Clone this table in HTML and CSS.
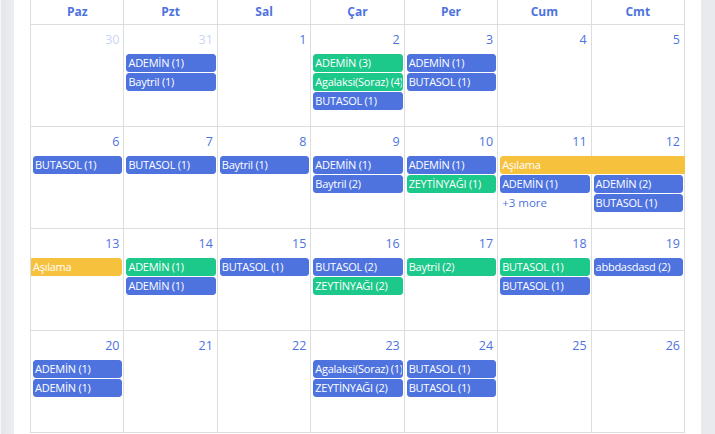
FILE: index.html
```html
<!DOCTYPE html>
<html lang="tr">
<head>
<meta charset="utf-8">
<title>Takvim</title>
<link rel="stylesheet" href="styles.css">
</head>
<body>
<div class="side side-left"></div>
<main class="main">
  <div class="cal">
    <div class="head">
      <div class="hc">Paz</div><div class="hc">Pzt</div><div class="hc">Sal</div><div class="hc">Çar</div><div class="hc">Per</div><div class="hc">Cum</div><div class="hc">Cmt</div>
    </div>

    <div class="week">
      <div class="bg c1"></div><div class="bg c2"></div><div class="bg c3"></div><div class="bg c4"></div><div class="bg c5"></div><div class="bg c6"></div><div class="bg c7"></div>
      <div class="num c1 other">30</div><div class="num c2 other">31</div><div class="num c3">1</div><div class="num c4">2</div><div class="num c5">3</div><div class="num c6">4</div><div class="num c7">5</div>
      <div class="ev blue c2 r1">ADEMİN (1)</div>
      <div class="ev blue c2 r2">Baytril (1)</div>
      <div class="ev green c4 r1">ADEMİN (3)</div>
      <div class="ev green c4 r2">Agalaksi(Soraz) (4)</div>
      <div class="ev blue c4 r3">BUTASOL (1)</div>
      <div class="ev blue c5 r1">ADEMİN (1)</div>
      <div class="ev blue c5 r2">BUTASOL (1)</div>
    </div>

    <div class="week">
      <div class="bg c1"></div><div class="bg c2"></div><div class="bg c3"></div><div class="bg c4"></div><div class="bg c5"></div><div class="bg c6"></div><div class="bg c7"></div>
      <div class="num c1">6</div><div class="num c2">7</div><div class="num c3">8</div><div class="num c4">9</div><div class="num c5">10</div><div class="num c6">11</div><div class="num c7">12</div>
      <div class="ev blue c1 r1">BUTASOL (1)</div>
      <div class="ev blue c2 r1">BUTASOL (1)</div>
      <div class="ev blue c3 r1">Baytril (1)</div>
      <div class="ev blue c4 r1">ADEMİN (1)</div>
      <div class="ev blue c4 r2">Baytril (2)</div>
      <div class="ev blue c5 r1">ADEMİN (1)</div>
      <div class="ev green c5 r2">ZEYTİNYAĞI (1)</div>
      <div class="ev yellow s6-2 r1 cont-end">Aşılama</div>
      <div class="ev blue c6 r2">ADEMİN (1)</div>
      <div class="more c6 r3">+3 more</div>
      <div class="ev blue c7 r2">ADEMİN (2)</div>
      <div class="ev blue c7 r3">BUTASOL (1)</div>
    </div>

    <div class="week">
      <div class="bg c1"></div><div class="bg c2"></div><div class="bg c3"></div><div class="bg c4"></div><div class="bg c5"></div><div class="bg c6"></div><div class="bg c7"></div>
      <div class="num c1">13</div><div class="num c2">14</div><div class="num c3">15</div><div class="num c4">16</div><div class="num c5">17</div><div class="num c6">18</div><div class="num c7">19</div>
      <div class="ev yellow c1 r1 cont-start">Aşılama</div>
      <div class="ev green c2 r1">ADEMİN (1)</div>
      <div class="ev blue c2 r2">ADEMİN (1)</div>
      <div class="ev blue c3 r1">BUTASOL (1)</div>
      <div class="ev blue c4 r1">BUTASOL (2)</div>
      <div class="ev green c4 r2">ZEYTİNYAĞI (2)</div>
      <div class="ev green c5 r1">Baytril (2)</div>
      <div class="ev green c6 r1">BUTASOL (1)</div>
      <div class="ev blue c6 r2">BUTASOL (1)</div>
      <div class="ev blue c7 r1">abbdasdasd (2)</div>
    </div>

    <div class="week">
      <div class="bg c1"></div><div class="bg c2"></div><div class="bg c3"></div><div class="bg c4"></div><div class="bg c5"></div><div class="bg c6"></div><div class="bg c7"></div>
      <div class="num c1">20</div><div class="num c2">21</div><div class="num c3">22</div><div class="num c4">23</div><div class="num c5">24</div><div class="num c6">25</div><div class="num c7">26</div>
      <div class="ev blue c1 r1">ADEMİN (1)</div>
      <div class="ev blue c1 r2">ADEMİN (1)</div>
      <div class="ev blue c4 r1">Agalaksi(Soraz) (1)</div>
      <div class="ev blue c4 r2">ZEYTİNYAĞI (2)</div>
      <div class="ev blue c5 r1">BUTASOL (1)</div>
      <div class="ev blue c5 r2">BUTASOL (1)</div>
    </div>
  </div>
</main>
<div class="side side-right"></div>
</body>
</html>
```

FILE: styles.css
```css
* { box-sizing: border-box; }
html, body { margin: 0; padding: 0; }
body {
  display: flex;
  height: 434px;
  overflow: hidden;
  background: #fff;
  font-family: "Open Sans", "Noto Sans", "Liberation Sans", sans-serif;
}
.side { width: 14px; flex: none; }
.side-left {
  background: linear-gradient(to right, #f6f7f9 0, #f6f7f9 1px, #e5e6eb 1px, #eceef2 14px);
}
.side-right { background: #e9eaee; }
.main { flex: 1; padding: 0 16px; }
.cal { width: 655px; border-left: 1px solid #dddddd; }

.head {
  display: grid;
  grid-template-columns: repeat(7, 1fr);
  height: 25px;
  border-bottom: 1px solid #dddddd;
}
.hc {
  border-right: 1px solid #dddddd;
  text-align: center;
  font-weight: 700;
  font-size: 12px;
  line-height: 24px;
  color: #4e73df;
}

.week {
  display: grid;
  grid-template-columns: repeat(7, 1fr);
  grid-template-rows: 29px 19px 19px 19px 1fr;
  height: 102px;
  border-bottom: 1px solid #dddddd;
}
.bg { grid-row: 1 / -1; border-right: 1px solid #dddddd; }
.c1 { grid-column: 1; }
.c2 { grid-column: 2; }
.c3 { grid-column: 3; }
.c4 { grid-column: 4; }
.c5 { grid-column: 5; }
.c6 { grid-column: 6; }
.c7 { grid-column: 7; }
.s6-2 { grid-column: 6 / span 2; }
.r1 { grid-row: 2; }
.r2 { grid-row: 3; }
.r3 { grid-row: 4; }

.num {
  grid-row: 1;
  text-align: right;
  padding: 6px 5px 0 0;
  font-size: 12.5px;
  line-height: 18px;
  color: #4e73df;
}
.num.other { opacity: 0.3; }

.ev {
  margin: 0 2px 1px 2px;
  height: 18px;
  border: 1px solid;
  border-radius: 3px;
  padding: 0 1px;
  font-size: 11px;
  letter-spacing: -0.25px;
  line-height: 16px;
  color: #fff;
  white-space: nowrap;
  overflow: hidden;
}
.blue { background: #4e73df; border-color: #4e73df; }
.green { background: #1cc88a; border-color: #1cc88a; }
.yellow { background: #f6c23e; border-color: #f6c23e; }
.cont-end { margin-right: 0; border-top-right-radius: 0; border-bottom-right-radius: 0; }
.cont-start { margin-left: 0; border-top-left-radius: 0; border-bottom-left-radius: 0; }

.more {
  padding: 0 4px;
  font-size: 11.5px;
  line-height: 18px;
  color: #4e73df;
}
```
